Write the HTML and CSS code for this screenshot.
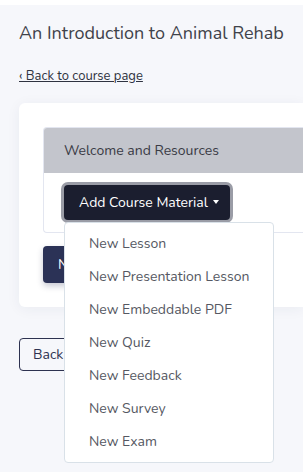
FILE: index.html
```html
<!DOCTYPE html>
<html lang="en">
<head>
    <meta charset="UTF-8">
    <meta name="viewport" content="width=device-width, initial-scale=1.0">
    <title>An Introduction to Animal Rehab</title>
    <link rel="stylesheet" href="styles.css">
</head>
<body>
    <div class="topbar"></div>
    <div class="page">
        <h1 class="page-title">An Introduction to Animal Rehab</h1>
        <a href="#" class="back-link">&lsaquo; Back to course page</a>

        <div class="card">
            <div class="list-group">
                <div class="list-header">Welcome and Resources</div>
                <div class="list-item">
                    <div class="dropdown">
                        <button class="btn btn-dark dropdown-toggle">Add Course Material</button>
                        <div class="dropdown-menu">
                            <a href="#" class="dropdown-item">New Lesson</a>
                            <a href="#" class="dropdown-item">New Presentation Lesson</a>
                            <a href="#" class="dropdown-item">New Embeddable PDF</a>
                            <a href="#" class="dropdown-item">New Quiz</a>
                            <a href="#" class="dropdown-item">New Feedback</a>
                            <a href="#" class="dropdown-item">New Survey</a>
                            <a href="#" class="dropdown-item">New Exam</a>
                        </div>
                    </div>
                </div>
            </div>
            <button class="btn btn-navy">N</button>
        </div>

        <button class="btn btn-outline">Back</button>
    </div>
</body>
</html>
```

FILE: styles.css
```css
body {
    margin: 0;
    min-height: 100vh;
    font-family: Nunito, "Noto Sans", sans-serif;
    background-color: #f6f7fb;
    color: #5a5c69;
}
.topbar {
    height: 5px;
    background: #fff;
}
.page {
    padding-left: 19px;
}
.page-title {
    margin: 18px 0 0;
    font-size: 18px;
    font-weight: 400;
    line-height: 1.2;
    color: #3f424a;
}
.back-link {
    display: inline-block;
    margin-top: 21px;
    font-size: 13px;
    line-height: 20px;
    color: #2f3341;
    text-decoration: underline;
}
.card {
    margin-top: 17px;
    background: #fff;
    border-radius: 6px 0 0 6px;
    padding: 24px 0 24px 24px;
    box-shadow: 0 2px 14px rgba(40, 50, 90, 0.06);
}
.list-group {
    border: 1px solid #e3e6f0;
    border-right: 0;
    border-radius: 4px 0 0 4px;
}
.list-header {
    background: #c3c5cc;
    padding: 12px 20px;
    font-size: 14px;
    line-height: 21px;
    color: #3a3b45;
    border-radius: 3px 0 0 0;
}
.list-item {
    padding: 12px 20px;
}
.dropdown {
    position: relative;
    display: inline-block;
}
.btn {
    font-family: inherit;
    font-size: 14px;
    line-height: 21px;
    border-radius: 4px;
    cursor: pointer;
}
.btn-dark {
    display: block;
    padding: 7px 11px 7px 15px;
    border: 0;
    background: #1b1e2f;
    color: #fff;
    box-shadow: 0 0 0 3px #9a9ca6;
}
.dropdown-toggle::after {
    content: "";
    display: inline-block;
    margin-left: 5px;
    vertical-align: 3px;
    border-top: 4px solid #fff;
    border-left: 3.5px solid transparent;
    border-right: 3.5px solid transparent;
}
.dropdown-menu {
    position: absolute;
    top: 37px;
    left: 0;
    z-index: 10;
    width: 208px;
    padding: 4px 0;
    background: #fff;
    border: 1px solid #d9e1e8;
    border-radius: 4px;
}
.dropdown-item {
    display: block;
    padding: 6px 24px;
    font-size: 14px;
    line-height: 21px;
    color: #555862;
    text-decoration: none;
    white-space: nowrap;
}
.btn-navy {
    margin-top: 13px;
    width: 80px;
    padding: 8px 15px;
    border: 0;
    text-align: left;
    background: #2b3256;
    color: #fff;
    box-shadow: 0 3px 6px rgba(30, 40, 80, 0.25);
}
.btn-outline {
    margin-top: 31px;
    padding: 5px 13px;
    border: 1px solid #2d3250;
    background: transparent;
    color: #2d3250;
}
```
